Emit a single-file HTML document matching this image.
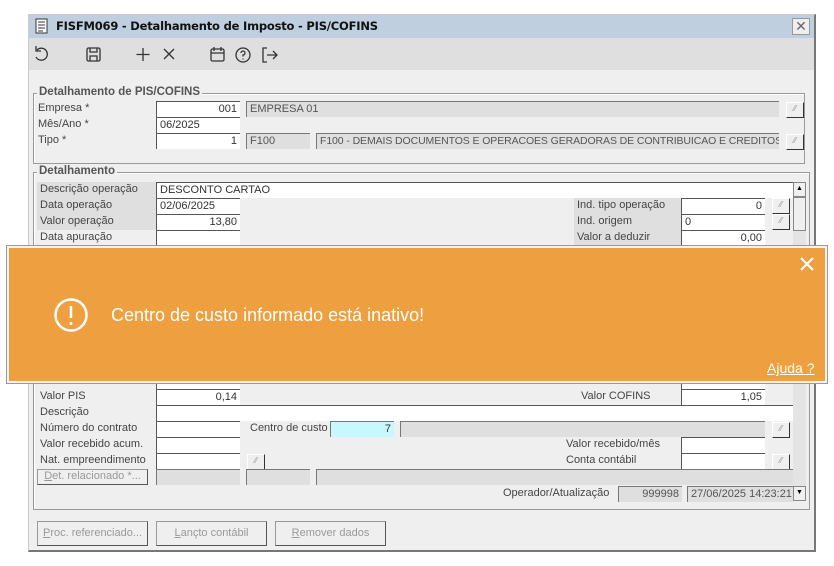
<!DOCTYPE html>
<html><head><meta charset="utf-8"><style>
*{box-sizing:border-box;margin:0;padding:0}
body{width:834px;height:566px;background:#fff;position:relative;overflow:hidden;font-family:"Liberation Sans",Arial,sans-serif;font-size:11px;color:#444}
.a{position:absolute}
.win{left:28px;top:14px;width:788px;height:538px;background:#efefef;border:1px solid #ccc;border-right:2px solid #777;border-bottom:2px solid #777}
.title{left:29px;top:15px;width:785px;height:23px;background:#bfcfdf;font-weight:bold;color:#111;padding:4px 0 0 27px;font-family:"DejaVu Sans",sans-serif;font-size:11.5px;letter-spacing:-0.2px}
.tb{left:29px;top:38px;width:785px;height:32px;background:#dfdfdf}
.grp{border:1px solid #999;box-shadow:1px 1px 0 #fff inset}
.leg{background:#efefef;padding:0 2px;color:#555;font-weight:bold;font-size:11.5px}
.in{background:#fff;border-top:1px solid #555;border-left:1px solid #555;height:16px;padding:1px 3px;color:#333;white-space:nowrap;overflow:hidden}
.ro{background:#dfdfdf;border-top:1px solid #777;border-left:1px solid #777;height:16px;padding:1px 3px;color:#555;white-space:nowrap;overflow:hidden}
.r{text-align:right}
.lb{height:16px;padding:1px 3px;color:#444}
.lbg{background:#dfdfdf}
.btn{width:18px;height:16px;background:#efefef;border-right:1px solid #333;border-bottom:1px solid #333;border-top:1px solid #fff;border-left:1px solid #fff;font-size:8px;color:#999;text-align:center;line-height:12px}
.pb{height:25px;border:1px solid #999;border-right-color:#555;border-bottom-color:#555;background:#efefef;color:#999;text-align:center;line-height:22px;font-size:11px}
</style></head><body>
<div class="a win"></div>
<div class="a title">FISFM069 - Detalhamento de Imposto - PIS/COFINS</div>
<svg class="a" style="left:35px;top:18px" width="14" height="16"><rect x="1" y="1" width="11" height="14" fill="#fff" stroke="#333"/><path d="M3 4h7M3 7h7M3 10h7M3 13h5" stroke="#333"/></svg>
<div class="a" style="left:792px;top:18px;width:18px;height:17px;background:#eee;border:1px solid #999;color:#666;text-align:center;font-size:14px;line-height:14px">✕</div>
<div class="a tb"></div>
<svg class="a" style="left:30px;top:44px" width="260" height="22" fill="none" stroke="#333" stroke-width="1.3">
<path d="M7 6a6 6 0 1 1-1 7M6 2v5h5"/>
<rect x="57" y="4" width="13" height="13" rx="1.5"/><path d="M60 4v4h7V4M60 17v-5h7v5"/>
<path d="M113 4v13M106.5 10.5h13M134 5l10 10M144 5l-10 10"/>
<rect x="181" y="5" width="13" height="12" rx="1.5"/><path d="M181 9h13M184 3v4M191 3v4"/>
<circle cx="213" cy="11" r="7"/><path d="M211 9a2 2 0 1 1 2 2v1.5M213 14.5v1"/>
<path d="M237 4h-4v14h4M237 11h10M243 7l4 4-4 4"/>
</svg>
<!-- group 1 -->
<div class="a grp" style="left:33px;top:93px;width:772px;height:71px"></div>
<div class="a leg" style="left:37px;top:86px">Detalhamento de PIS/COFINS</div>
<div class="a lb" style="left:35px;top:101px">Empresa *</div>
<div class="a lb" style="left:35px;top:117px">Mês/Ano *</div>
<div class="a lb" style="left:35px;top:133px">Tipo *</div>
<div class="a in r" style="left:156px;top:101px;width:84px">001</div>
<div class="a ro" style="left:246px;top:101px;width:533px">EMPRESA 01</div>
<div class="a btn" style="left:786px;top:102px">⁄⁄</div>
<div class="a in" style="left:156px;top:117px;width:84px">06/2025</div>
<div class="a in r" style="left:156px;top:133px;width:84px">1</div>
<div class="a ro" style="left:246px;top:133px;width:64px">F100</div>
<div class="a ro" style="left:316px;top:133px;width:463px;font-size:10.5px;letter-spacing:-0.1px">F100 - DEMAIS DOCUMENTOS E OPERACOES GERADORAS DE CONTRIBUICAO E CREDITOS</div>
<div class="a btn" style="left:786px;top:134px">⁄⁄</div>
<!-- group 2 -->
<div class="a grp" style="left:33px;top:172px;width:777px;height:338px"></div>
<div class="a leg" style="left:37px;top:165px">Detalhamento</div>
<div class="a" style="left:793px;top:182px;width:13px;height:319px;background:#e4e4e4"></div>
<div class="a" style="left:793px;top:182px;width:13px;height:15px;background:#efefef;border:1px solid #888;font-size:7px;text-align:center;line-height:12px;color:#000">▲</div>
<div class="a" style="left:793px;top:197px;width:13px;height:34px;background:#efefef;border:1px solid #888"></div>
<div class="a" style="left:793px;top:486px;width:13px;height:15px;background:#efefef;border:1px solid #888;font-size:7px;text-align:center;line-height:12px;color:#000">▼</div>
<div class="a lb lbg" style="left:37px;top:182px;width:119px">Descrição operação</div>
<div class="a lb lbg" style="left:37px;top:198px;width:119px">Data operação</div>
<div class="a lb lbg" style="left:37px;top:214px;width:119px">Valor operação</div>
<div class="a lb" style="left:37px;top:230px">Data apuração</div>
<div class="a in" style="left:156px;top:182px;width:637px">DESCONTO CARTAO</div>
<div class="a in" style="left:156px;top:198px;width:84px">02/06/2025</div>
<div class="a in r" style="left:156px;top:214px;width:84px">13,80</div>
<div class="a in" style="left:156px;top:230px;width:84px"></div>
<div class="a lb lbg" style="left:574px;top:198px;width:107px">Ind. tipo operação</div>
<div class="a lb lbg" style="left:574px;top:214px;width:107px">Ind. origem</div>
<div class="a lb lbg" style="left:574px;top:230px;width:107px">Valor a deduzir</div>
<div class="a in r" style="left:681px;top:198px;width:84px">0</div>
<div class="a in" style="left:681px;top:214px;width:84px">0</div>
<div class="a in r" style="left:681px;top:230px;width:84px">0,00</div>
<div class="a btn" style="left:772px;top:198px">⁄⁄</div>
<div class="a btn" style="left:772px;top:214px">⁄⁄</div>
<div class="a in" style="left:156px;top:381px;width:84px;height:8px"></div>
<div class="a in" style="left:681px;top:381px;width:84px;height:8px"></div>
<div class="a lb" style="left:37px;top:389px">Valor PIS</div>
<div class="a in r" style="left:156px;top:389px;width:84px">0,14</div>
<div class="a lb" style="left:578px;top:389px">Valor COFINS</div>
<div class="a in r" style="left:681px;top:389px;width:84px">1,05</div>
<div class="a lb" style="left:37px;top:405px">Descrição</div>
<div class="a in" style="left:156px;top:405px;width:637px"></div>
<div class="a lb" style="left:37px;top:421px">Número do contrato</div>
<div class="a in" style="left:156px;top:421px;width:84px"></div>
<div class="a lb" style="left:247px;top:421px">Centro de custo</div>
<div class="a in r" style="left:330px;top:421px;width:64px;background:#c8f8ff;border-color:#777">7</div>
<div class="a ro" style="left:400px;top:421px;width:365px"></div>
<div class="a btn" style="left:772px;top:422px">⁄⁄</div>
<div class="a lb" style="left:37px;top:437px">Valor recebido acum.</div>
<div class="a in" style="left:156px;top:437px;width:84px"></div>
<div class="a lb" style="left:563px;top:437px">Valor recebido/mês</div>
<div class="a in" style="left:681px;top:437px;width:84px"></div>
<div class="a lb" style="left:37px;top:453px">Nat. empreendimento</div>
<div class="a in" style="left:156px;top:453px;width:84px"></div>
<div class="a btn" style="left:247px;top:454px">⁄⁄</div>
<div class="a lb" style="left:563px;top:453px">Conta contábil</div>
<div class="a in" style="left:681px;top:453px;width:84px"></div>
<div class="a btn" style="left:772px;top:454px">⁄⁄</div>
<div class="a pb" style="left:37px;top:469px;width:111px;height:16px;line-height:13px"><u>D</u>et. relacionado *...</div>
<div class="a ro" style="left:156px;top:469px;width:84px"></div>
<div class="a ro" style="left:246px;top:469px;width:64px"></div>
<div class="a ro" style="left:316px;top:469px;width:477px"></div>
<div class="a lb" style="left:500px;top:486px">Operador/Atualização</div>
<div class="a ro r" style="left:618px;top:486px;width:64px">999998</div>
<div class="a ro" style="left:687px;top:486px;width:106px">27/06/2025 14:23:21</div>
<div class="a pb" style="left:37px;top:521px;width:111px"><u>P</u>roc. referenciado...</div>
<div class="a pb" style="left:156px;top:521px;width:111px"><u>L</u>ançto contábil</div>
<div class="a pb" style="left:275px;top:521px;width:111px"><u>R</u>emover dados</div>
<!-- toast -->
<div class="a" style="left:7px;top:246px;width:820px;height:137px;background:#ee9f40;border:2px solid #f4f4f4;box-shadow:0 0 0 1px #999"></div>
<svg class="a" style="left:53px;top:297px" width="36" height="36" fill="none" stroke="#fff" stroke-width="2.5"><circle cx="18" cy="18" r="15.5"/><path d="M18 9v12M18 25v3"/></svg>
<div class="a" style="left:111px;top:305px;color:#fff;font-size:18px;font-family:'Liberation Sans',sans-serif">Centro de custo informado está inativo!</div>
<svg class="a" style="left:800px;top:257px" width="14" height="14" stroke="#fff" stroke-width="2"><path d="M1 1l12 12M13 1L1 13"/></svg>
<div class="a" style="left:767px;top:360px;color:#fff;font-size:14px;text-decoration:underline">Ajuda ?</div>
</body></html>
